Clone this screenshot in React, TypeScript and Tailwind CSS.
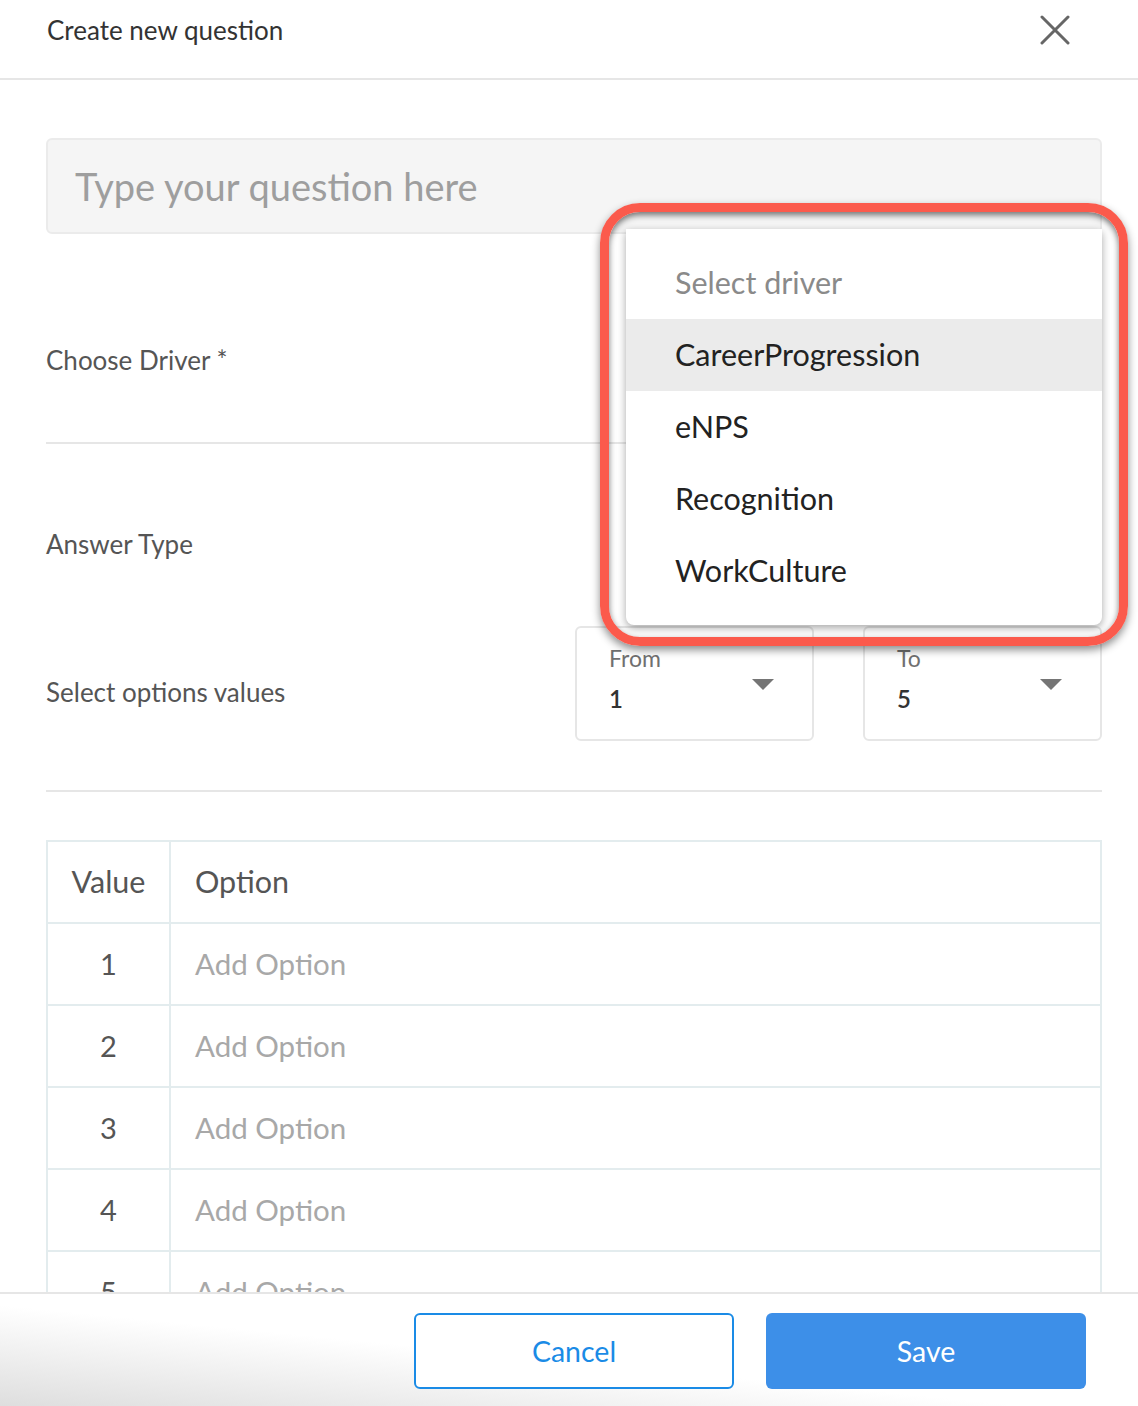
import React from "react";

const font = { fontFamily: "Lato, 'Noto Sans', sans-serif" };

function Caret() {
  return (
    <svg width="22" height="11" viewBox="0 0 22 11" className="shrink-0">
      <path d="M0 0 L22 0 L11 11 Z" fill="#757575" />
    </svg>
  );
}

function SelectBox({ label, value }: { label: string; value: string }) {
  return (
    <div className="w-[239px] h-[115px] border-2 border-[#e6e6e6] rounded-[6px] bg-white pl-[32px] pr-[38px] pt-[17px] flex justify-between">
      <div className="flex flex-col">
        <span className="text-[23px] leading-[26px] text-[#707070]">{label}</span>
        <span className="text-[24px] leading-[30px] text-[#333] font-semibold mt-[13px]">{value}</span>
      </div>
      <div className="pt-[34px]">
        <Caret />
      </div>
    </div>
  );
}

export default function App() {
  const rows = [1, 2, 3, 4, 5];
  return (
    <div style={font} className="relative w-[1138px] h-[1406px] bg-white flex flex-col overflow-hidden">
      {/* Header */}
      <div className="h-[80px] shrink-0 border-b-2 border-[#e6e6e6] flex items-center justify-between pl-[47px] pr-[68px] pb-[18px]">
        <span className="text-[26px] text-[#333]">Create new question</span>
        <svg width="30" height="30" viewBox="0 0 30 30">
          <path d="M2 2 L28 28 M28 2 L2 28" stroke="#666" strokeWidth="3" strokeLinecap="round" />
        </svg>
      </div>

      {/* Body */}
      <div className="flex-1 overflow-hidden pl-[46px] pr-[36px] pt-[58px]">
        <div className="h-[96px] bg-[#f5f5f5] border-2 border-[#ebebeb] rounded-[6px] flex items-center pl-[27px]">
          <span className="text-[38px] text-[#9e9e9e]">Type your question here</span>
        </div>

        <div className="h-[210px] border-b-2 border-[#e6e6e6] pt-[111px]">
          <span className="text-[26px] leading-[30px] text-[#555]">Choose Driver *</span>
        </div>

        <div className="h-[182px] pt-[85px]">
          <span className="text-[26px] leading-[30px] text-[#555]">Answer Type</span>
        </div>

        <div className="h-[166px] border-b-2 border-[#e6e6e6] flex items-start">
          <div className="flex-1 pt-[51px]">
            <span className="text-[26px] leading-[30px] text-[#555]">Select options values</span>
          </div>
          <div className="flex gap-[49px]">
            <SelectBox label="From" value="1" />
            <SelectBox label="To" value="5" />
          </div>
        </div>

        <div className="mt-[48px] border-2 border-[#e3ecee]">
          <div className="flex h-[82px] border-b-2 border-[#e3ecee]">
            <div className="w-[123px] border-r-2 border-[#e3ecee] flex items-center justify-center">
              <span className="text-[30.5px] text-[#555]">Value</span>
            </div>
            <div className="flex-1 flex items-center pl-[24px]">
              <span className="text-[30.5px] text-[#555]">Option</span>
            </div>
          </div>
          {rows.map((r) => (
            <div key={r} className="flex h-[82px] border-b-2 border-[#e3ecee]">
              <div className="w-[123px] border-r-2 border-[#e3ecee] flex items-center justify-center">
                <span className="text-[29px] text-[#555]">{r}</span>
              </div>
              <div className="flex-1 flex items-center pl-[24px]">
                <span className="text-[29.5px] text-[#a8a8a8]">Add Option</span>
              </div>
            </div>
          ))}
        </div>
      </div>

      {/* Footer */}
      <div className="h-[114px] shrink-0 border-t-2 border-[#e6e6e6] bg-[linear-gradient(to_top_right,#dedede_0%,#ffffff_45%)] flex items-start justify-end pt-[19px] pr-[52px] gap-[32px]">
        <button className="w-[320px] h-[76px] border-2 border-[#1a8be6] rounded-[6px] bg-white text-[#1a8be6] text-[28.5px]">
          Cancel
        </button>
        <button className="w-[320px] h-[76px] rounded-[6px] bg-[#3d8fe8] text-white text-[28.5px]">
          Save
        </button>
      </div>

      {/* Dropdown menu */}
      <div className="absolute left-[626px] top-[229px] w-[476px] bg-white rounded-b-[8px] shadow-[0_3px_8px_rgba(0,0,0,0.35)] pt-[18px] pb-[18px]">
        <div className="h-[72px] flex items-center pl-[49px] text-[30.5px] text-[#8a8a8a]">Select driver</div>
        <div className="h-[72px] flex items-center pl-[49px] text-[30.5px] text-[#222] bg-[#ebebeb]">CareerProgression</div>
        <div className="h-[72px] flex items-center pl-[49px] text-[30.5px] text-[#222]">eNPS</div>
        <div className="h-[72px] flex items-center pl-[49px] text-[30.5px] text-[#222]">Recognition</div>
        <div className="h-[72px] flex items-center pl-[49px] text-[30.5px] text-[#222]">WorkCulture</div>
      </div>

      {/* Red annotation */}
      <div className="absolute left-[600px] top-[203px] w-[528px] h-[443px] border-[9px] border-[#fb5a4c] rounded-[40px] shadow-[0_4px_8px_rgba(0,0,0,0.45),inset_0_3px_6px_rgba(0,0,0,0.55)] pointer-events-none" />
    </div>
  );
}
